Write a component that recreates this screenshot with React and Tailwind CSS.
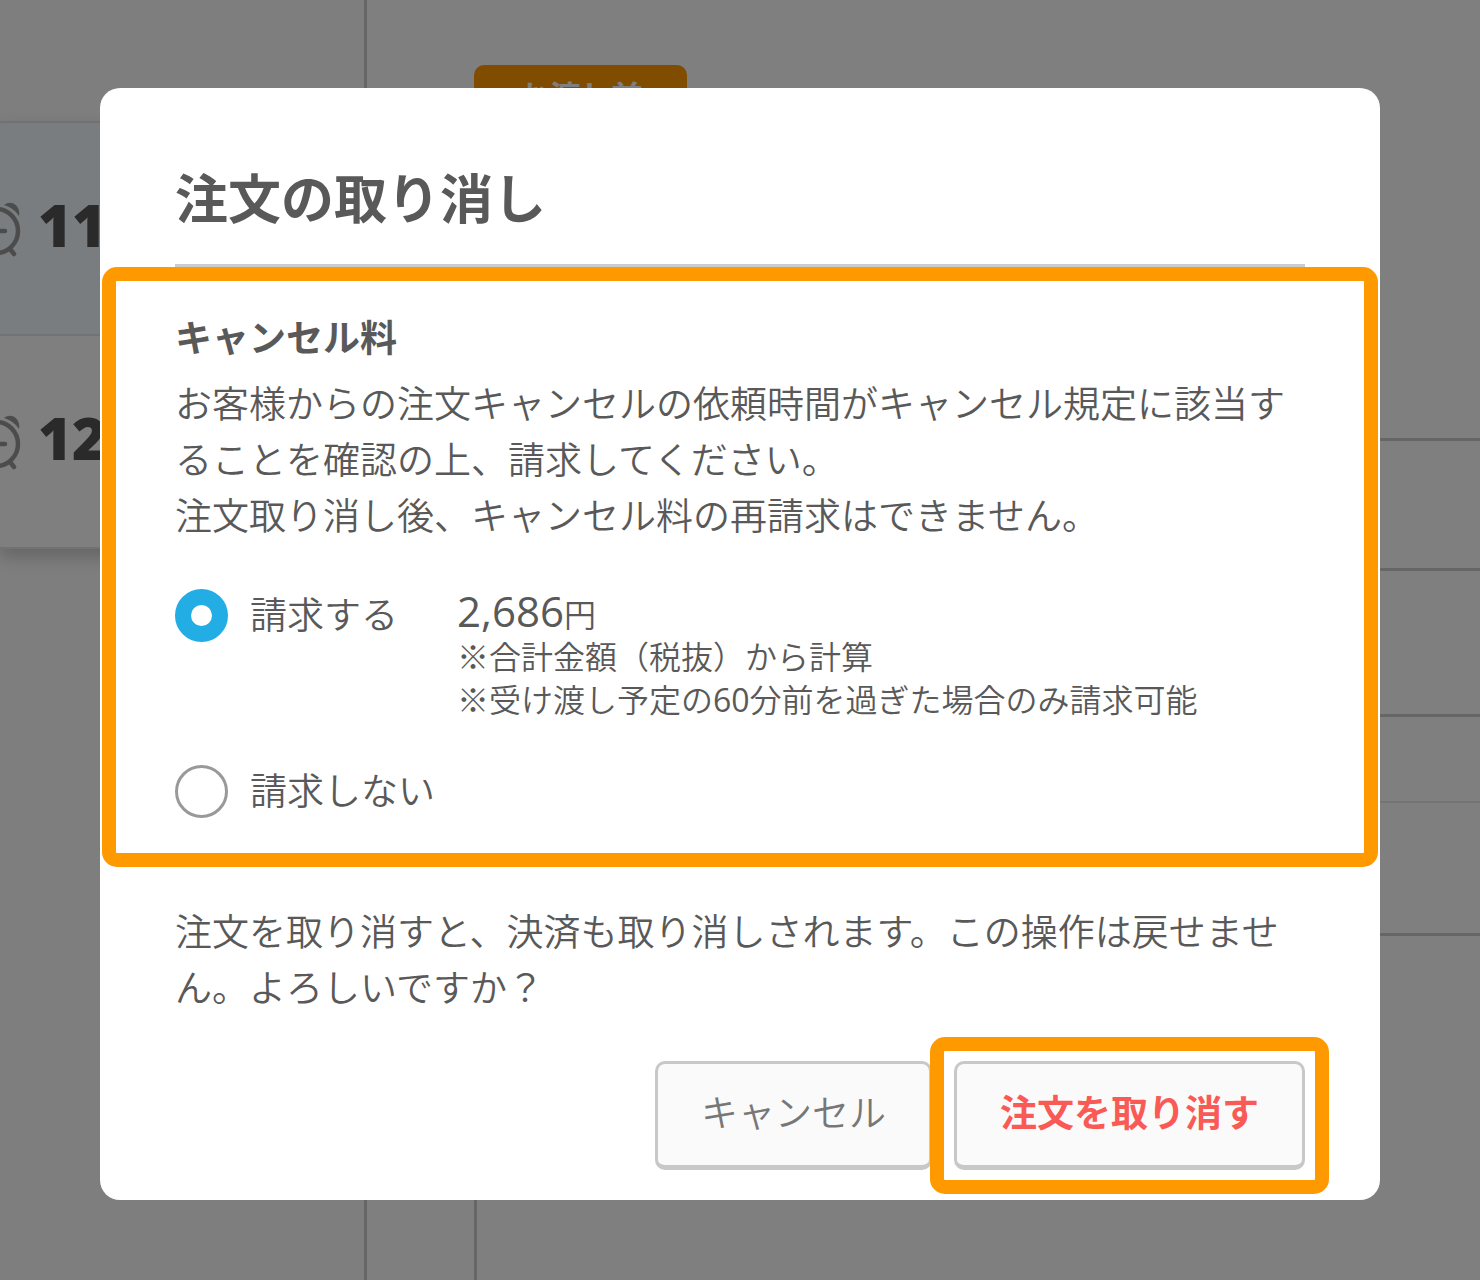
import { useState } from 'react';

const orders = [
  { id: 1, time: '11', selected: true },
  { id: 2, time: '12', selected: false },
];

function AlarmClock() {
  return (
    <svg className="w-15 h-15 flex-shrink-0 text-[#999]" viewBox="0 0 60 60" fill="none" stroke="currentColor" strokeWidth="4.5" strokeLinecap="round">
      <circle cx="30" cy="32" r="22" />
      <path d="M30 18v14h9" />
      <path d="M44 50l4 5M16 50l-4 5" />
      <path d="M38 6C45 0 55 6 53 17C49 11 44 8 38 6ZM22 6C15 0 5 6 7 17C11 11 16 8 22 6Z" fill="currentColor" stroke="none" />
    </svg>
  );
}

function OrderPage() {
  return (
    <div className="h-screen flex overflow-hidden bg-white">
      {/* Order list */}
      <aside className="w-[367px] flex-shrink-0 overflow-hidden border-r-3 border-[#ccc] bg-[#fcfcfc] pt-[121px]">
        <ul className="border-t-2 border-[#e4e4e4] bg-white shadow-[0_8px_16px_rgba(0,0,0,0.2)]">
          {orders.map((order) => (
            <li
              key={order.id}
              className={`h-[213px] flex items-center gap-3 -ml-[34px] border-b-2 border-[#e4e4e4] ${
                order.selected ? 'bg-[#f2fbff]' : 'bg-white'
              }`}
            >
              <AlarmClock />
              <span className="pb-2 text-[58px] font-extrabold text-[#555]">{order.time}</span>
            </li>
          ))}
        </ul>
      </aside>

      {/* Order detail */}
      <main className="flex-1 pl-[107px] pt-[65px]">
        <span className="flex h-16 w-[213px] items-center justify-center rounded-[10px] bg-[#ff9900] pb-0.5 text-[31px] font-bold text-white">
          お渡し前
        </span>
        <div className="mt-[309px] h-screen border-l-3 border-t-3 border-[#ccc]">
          <div className="h-[130px] border-b-3 border-[#ccc]" />
          <div className="h-[146px] border-b-3 border-[#ccc]" />
          <div className="h-[86px] border-b-2 border-[#e8e8e8]" />
          <div className="h-[133px] border-b-3 border-[#ccc]" />
        </div>
      </main>
    </div>
  );
}

function Radio({ id, checked, onChange }) {
  return (
    <input
      type="radio"
      id={id}
      name="fee"
      checked={checked}
      onChange={onChange}
      className="w-[53px] h-[53px] flex-shrink-0 appearance-none rounded-full border-3 border-[#999] bg-white checked:border-16 checked:border-[#22ade5]"
    />
  );
}

function CancelDialog() {
  const [charge, setCharge] = useState(true);

  return (
    <div
      role="dialog"
      aria-modal="true"
      aria-labelledby="dialog-title"
      className="w-full rounded-[20px] bg-white pb-[30px] text-[37px] leading-[56px] font-[350] text-[#595959]"
    >
      <header className="mx-[75px] border-b-3 border-[#ccc] pt-[71px] pb-[25px]">
        <h1 id="dialog-title" className="text-[53px] leading-[80px] font-bold">注文の取り消し</h1>
      </header>

      {/* Cancellation fee */}
      <section className="mx-0.5 rounded-[15px] border-14 border-[#ff9900] px-[59px] pt-[29px] pb-[34px]">
        <h2 className="mb-[10px] font-bold">キャンセル料</h2>
        <p>お客様からの注文キャンセルの依頼時間がキャンセル規定に該当することを確認の上、請求してください。</p>
        <p>注文取り消し後、キャンセル料の再請求はできません。</p>

        <div className="mt-[43px] flex items-start">
          <div className="flex items-center gap-[22px]">
            <Radio id="fee-charge" checked={charge} onChange={() => setCharge(true)} />
            <label htmlFor="fee-charge" className="w-[207px]">請求する</label>
          </div>
          <div className="text-[32px] leading-[43px]">
            <p className="flex h-12 items-baseline leading-12">
              <span className="text-[42px] font-normal">2,686</span>円
            </p>
            <p>※合計金額（税抜）から計算</p>
            <p>※受け渡し予定の<span className="font-normal">60</span>分前を過ぎた場合のみ請求可能</p>
          </div>
        </div>
        <div className="mt-[42px] flex items-center gap-[22px]">
          <Radio id="fee-none" checked={!charge} onChange={() => setCharge(false)} />
          <label htmlFor="fee-none">請求しない</label>
        </div>
      </section>

      <p className="mx-[75px] mt-[37px]">
        注文を取り消すと、決済も取り消しされます。この操作は戻せません。よろしいですか？
      </p>

      <footer className="mx-[75px] mt-[45px] flex justify-end gap-[22px]">
        <button className="h-[109px] rounded-[10px] border-3 border-b-5 border-[#c8c8c8] bg-[#fafafa] px-[43px] pb-1 text-[#777]">
          キャンセル
        </button>
        <div className="relative">
          <button className="h-[109px] rounded-[10px] border-3 border-b-5 border-[#c8c8c8] bg-[#fafafa] px-[43px] pb-1 font-bold text-[#fa5a55]">
            注文を取り消す
          </button>
          <div className="pointer-events-none absolute -inset-6 rounded-[15px] border-14 border-[#ff9900]" />
        </div>
      </footer>
    </div>
  );
}

function App() {
  return (
    <div className="font-['Open_Sans','Noto_Sans_CJK_JP',sans-serif]">
      <OrderPage />
      <div className="fixed inset-0 overflow-hidden bg-black/50 px-[100px] pt-[88px]">
        <CancelDialog />
      </div>
    </div>
  );
}

export default App;
